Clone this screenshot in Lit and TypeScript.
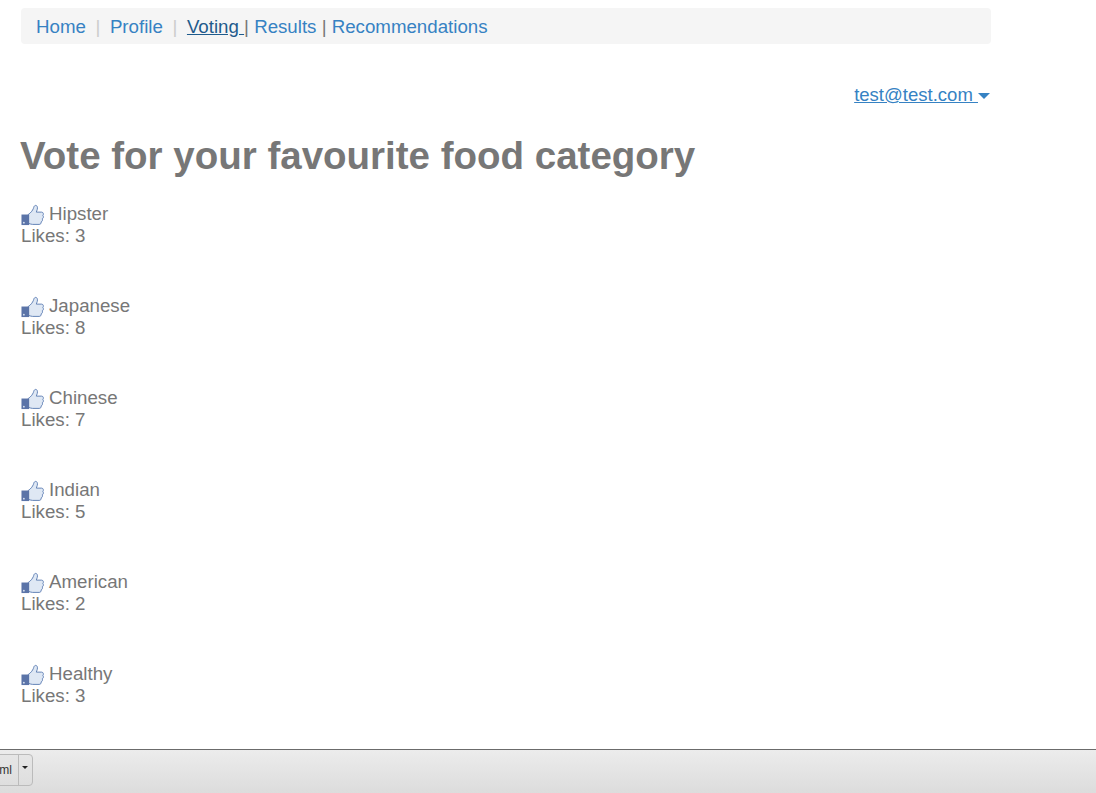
import { LitElement, css, html, svg } from 'lit';
import { customElement } from 'lit/decorators.js';

const categories = [
  { name: 'Hipster', likes: 3 },
  { name: 'Japanese', likes: 8 },
  { name: 'Chinese', likes: 7 },
  { name: 'Indian', likes: 5 },
  { name: 'American', likes: 2 },
  { name: 'Healthy', likes: 3 },
];

const thumb = svg`<svg class="thumb" width="23" height="22" viewBox="0 0 24 22">
  <path d="M7.5 10.5 C10 9 12 6.5 13 4 C13.5 2.5 13.5 1.5 15 1 C17 .8 17.5 3 17 5 L16 8 L21.5 8 C23.5 8 23.8 10.5 22.8 11.5 C23.8 12.5 23.5 14.5 22.2 15 C22.8 16.3 22.2 17.8 21 18.2 C21.3 19.8 20.3 20.8 19 20.8 L12 20.8 C10 20.8 9 20 7.5 19.5 Z" fill="#dfe8f4" stroke="#5f7fb5" stroke-width="1"/>
  <rect x="0.5" y="10.5" width="8" height="11" fill="#5b74a8"/>
  <circle cx="3" cy="19" r="0.9" fill="#dfe8f4"/>
</svg>`;

@customElement('app-root')
export class AppRoot extends LitElement {
  static styles = css`
    :host {
      display: block;
      position: relative;
      height: 793px;
      overflow: hidden;
      background: #fff;
      font-family: 'Liberation Sans', Arial, sans-serif;
      font-size: 18.7px;
      line-height: 22px;
      color: #777;
    }

    a {
      color: #3682c3;
      text-decoration: none;
    }

    .page {
      width: 970px;
      padding: 8px 0 0 21px;
    }

    .breadcrumb {
      display: flex;
      align-items: center;
      height: 36px;
      padding: 2px 15px 0;
      box-sizing: border-box;
      background: #f5f5f5;
      border-radius: 4px;
      white-space: pre;
    }

    .sep {
      color: #ccc;
      padding: 0 9.6px;
    }

    .bar {
      color: #777;
    }

    .active {
      color: #1f5b8c;
      text-decoration: underline;
    }

    .user {
      display: flex;
      justify-content: flex-end;
      margin-top: 40px;
      padding-right: 1px;
      font-size: 18.55px;
    }

    .user a {
      text-decoration: underline;
    }

    .caret {
      display: inline-block;
      width: 0;
      height: 0;
      vertical-align: middle;
      border-top: 6px solid #3682c3;
      border-left: 6px solid transparent;
      border-right: 6px solid transparent;
    }

    h1 {
      margin: 28px 0 0 -1px;
      font-size: 38.5px;
      line-height: 44px;
      font-weight: 700;
      color: #777;
    }

    .list {
      margin-top: 25px;
    }

    .item {
      height: 92px;
    }

    .name {
      display: flex;
      align-items: flex-end;
      gap: 5px;
      height: 22px;
    }

    .thumb {
      flex: none;
      margin-bottom: -1px;
    }

    .taskbar {
      position: absolute;
      left: 0;
      right: 0;
      bottom: 0;
      height: 44px;
      box-sizing: border-box;
      border-top: 1px solid #6b6b6b;
      background: linear-gradient(#ececec, #dcdcdc);
    }

    .download {
      position: absolute;
      left: -20px;
      top: 4px;
      display: flex;
      height: 32px;
      box-sizing: border-box;
      border: 1px solid #bbb;
      border-radius: 4px;
      background: linear-gradient(#e6e6e6, #dedede);
      font-size: 12px;
      line-height: 30px;
      color: #333;
    }

    .download span {
      width: 38px;
      text-align: right;
      padding-right: 6px;
      box-sizing: border-box;
      border-right: 1px solid #bbb;
    }

    .download i {
      display: block;
      width: 13px;
      position: relative;
    }

    .download i::after {
      content: '';
      position: absolute;
      left: 3px;
      top: 11px;
      border-top: 3px solid #222;
      border-left: 3px solid transparent;
      border-right: 3px solid transparent;
    }
  `;

  render() {
    return html`<div class="page">
        <nav class="breadcrumb">
          <a href="#">Home</a><span class="sep">|</span><a href="#">Profile</a
          ><span class="sep">|</span><a class="active" href="#">Voting </a
          ><span class="bar">| </span><a href="#">Results</a
          ><span class="bar"> | </span><a href="#">Recommendations</a>
        </nav>
        <div class="user">
          <a href="#">test@test.com <span class="caret"></span></a>
        </div>
        <h1>Vote for your favourite food category</h1>
        <div class="list">
          ${categories.map(
            (c) => html`<div class="item">
              <div class="name">${thumb}<span>${c.name}</span></div>
              <div>Likes: ${c.likes}</div>
            </div>`,
          )}
        </div>
      </div>
      <div class="taskbar">
        <div class="download"><span>ml</span><i></i></div>
      </div>`;
  }
}
